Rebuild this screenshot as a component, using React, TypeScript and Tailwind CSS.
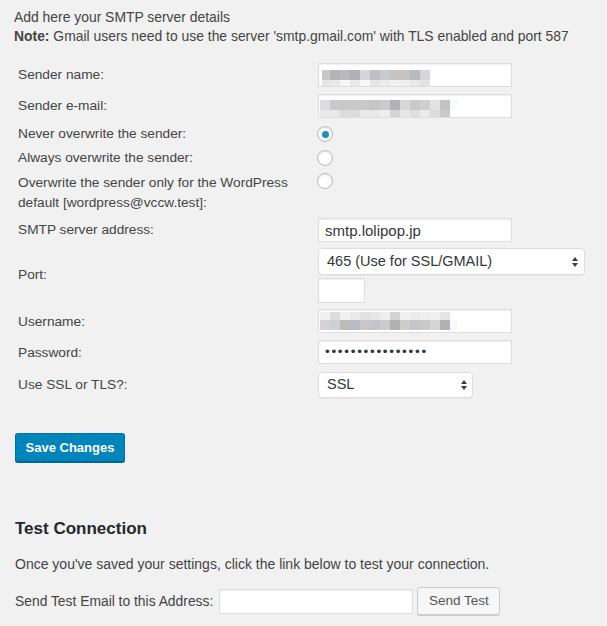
import React from "react";

type MRow = { h: number; colors: string[] };

function Mosaic({ rows, widths }: { rows: MRow[]; widths: number[] }) {
  return (
    <div className="flex flex-col">
      {rows.map((r, i) => (
        <div key={i} className="flex">
          {r.colors.map((c, j) => (
            <div key={j} style={{ width: widths[j], height: r.h, background: c }} />
          ))}
        </div>
      ))}
    </div>
  );
}

function Arrows() {
  return (
    <svg width="6" height="10" viewBox="0 0 6 10" className="block">
      <path d="M3 0L6 4H0z" fill="#3c3c3c" />
      <path d="M0 6H6L3 10z" fill="#3c3c3c" />
    </svg>
  );
}

function Radio({ checked }: { checked?: boolean }) {
  return (
    <div className="-ml-px w-[16px] h-[16px] rounded-full bg-white border border-[#b4b9be] shadow-[inset_0_1px_2px_rgba(0,0,0,0.1)] flex items-center justify-center">
      {checked && <div className="w-[7px] h-[7px] rounded-full bg-[#1e8cbe]" />}
    </div>
  );
}

function Row({
  label,
  className,
  labelClass,
  children,
}: {
  label: React.ReactNode;
  className: string;
  labelClass?: string;
  children: React.ReactNode;
}) {
  return (
    <div className={"flex " + className}>
      <div className={"w-[318px] shrink-0 pl-[18px] " + (labelClass || "")}>{label}</div>
      <div>{children}</div>
    </div>
  );
}

const boxCls =
  "bg-white border border-[#ddd] shadow-[inset_0_1px_2px_rgba(0,0,0,0.07)]";

const w10 = (n: number) => Array.from({ length: n }, () => 10);

export default function App() {
  return (
    <div className="font-['Liberation_Sans',Arial,Helvetica,sans-serif] min-h-[626px] bg-[#f1f1f1] text-[#444] text-[13.7px]">
      <div className="pl-[14px] pt-[8px] leading-[19px] text-[13.9px]">
        <p>Add here your SMTP server details</p>
        <p>
          <strong className="font-bold">Note:</strong> Gmail users need to use the server 'smtp.gmail.com' with TLS
          enabled and port 587
        </p>
      </div>

      <div className="mt-[15px]">
        <Row label="Sender name:" className="h-[28px] items-center">
          <div className={boxCls + " w-[194px] h-[24px] pl-[3px] pt-[6px]"}>
            <Mosaic
              widths={[8, ...w10(10)]}
              rows={[
                {
                  h: 10,
                  colors: ["#c8c6c7", "#b4b3b6", "#b9b8bb", "#b1b0b4", "#d5d5d7", "#bfbfc1", "#c8cbcd", "#c6c5c5", "#c6c5c5", "#b8bbbd", "#d6d6d8"],
                },
                {
                  h: 6,
                  colors: ["#e6e6e6", "#e9e9e9", "#f6f6f6", "#e9e9e9", "#f6f6f6", "#e4e5e5", "#eaecec", "#f1f1f1", "#efefef", "#e8e8e8", "#e3e3e3"],
                },
              ]}
            />
          </div>
        </Row>
        <Row label="Sender e-mail:" className="mt-[3px] h-[28px] items-center">
          <div className={boxCls + " w-[194px] h-[24px] pl-[1px] pt-[5px]"}>
            <Mosaic
              widths={[...w10(13), 7]}
              rows={[
                {
                  h: 10,
                  colors: ["#dcdcdc", "#c8c9cc", "#c9c7c7", "#c9c9cb", "#cac8c8", "#c6c6c9", "#cbcbcb", "#b2b2b6", "#d7d7d7", "#cacacd", "#cfcfcf", "#e2e2e4", "#c2c2c2", "#f6fafb"],
                },
                {
                  h: 7,
                  colors: ["#e8e8e8", "#e7e8ea", "#dcdcdc", "#d9dadd", "#e9e9e9", "#e7e8ea", "#eeeeee", "#d3d3d8", "#e8e7e7", "#dfdfe2", "#ebebeb", "#dcdcdc", "#c9c9cc", "#ffffff"],
                },
              ]}
            />
          </div>
        </Row>
        <Row label="Never overwrite the sender:" className="mt-[2px] h-[24px] items-center">
          <Radio checked />
        </Row>
        <Row label="Always overwrite the sender:" className="h-[24px] items-center">
          <Radio />
        </Row>
        <Row
          label={
            <>
              Overwrite the sender only for the WordPress
              <br />
              default [wordpress@vccw.test]:
            </>
          }
          className="h-[46px] items-start"
          labelClass="pt-[3px] leading-[20px]"
        >
          <div className="pt-[3px]">
            <Radio />
          </div>
        </Row>
        <Row label="SMTP server address:" className="h-[28px] items-center">
          <input
            readOnly
            value="smtp.lolipop.jp"
            className={boxCls + " block w-[194px] h-[24px] px-[6px] text-[15px] text-[#32373c] outline-none"}
          />
        </Row>
        <Row label="Port:" className="mt-[2px] h-[59px] items-center">
          <div className="flex flex-col gap-[3px]">
            <div className="w-[267px] h-[27px] bg-white border border-[#ddd] rounded-[4px] shadow-[0_1px_1px_rgba(0,0,0,0.04)] flex items-center justify-between pl-[8px] pr-[6px] text-[14.5px] text-[#32373c]">
              <span>465 (Use for SSL/GMAIL)</span>
              <Arrows />
            </div>
            <input readOnly className={boxCls + " block w-[47px] h-[25px] outline-none"} />
          </div>
        </Row>
        <Row label="Username:" className="mt-[2px] h-[28px] items-center" labelClass="pt-[2px]">
          <div className={boxCls + " w-[194px] h-[24px] pl-[1px] pt-[2px]"}>
            <Mosaic
              widths={[...w10(13), 8]}
              rows={[
                {
                  h: 8,
                  colors: ["#f0f0f0", "#dcdcdc", "#f0f0f0", "#e9e9e9", "#e1e1e1", "#e6e6e6", "#eeeeee", "#d3d3d3", "#f0f0f0", "#ebebeb", "#eeeeee", "#f0f0f0", "#e4e4e4", "#ffffff"],
                },
                {
                  h: 10,
                  colors: ["#d3d3d3", "#cdd0d4", "#bdbcbd", "#bbbcc1", "#c8c6c6", "#c3c4ca", "#cdcbcb", "#b1b1b4", "#cdcdcd", "#c5c5ca", "#cac9ca", "#d5d5d5", "#b1b0b2", "#f8f9ff"],
                },
              ]}
            />
          </div>
        </Row>
        <Row label="Password:" className="mt-[3px] h-[28px] items-center" labelClass="pt-[2px]">
          <div className={boxCls + " w-[194px] h-[24px] pl-[6px] flex items-center text-[13.5px] tracking-[1.7px] text-[#32373c]"}>
            ••••••••••••••••
          </div>
        </Row>
        <Row label="Use SSL or TLS?:" className="mt-[4px] h-[30px] items-center">
          <div className="w-[155px] h-[26px] bg-white border border-[#ddd] rounded-[4px] shadow-[0_1px_1px_rgba(0,0,0,0.04)] flex items-center justify-between pl-[8px] pr-[5px] text-[14.5px] text-[#32373c]">
            <span>SSL</span>
            <Arrows />
          </div>
        </Row>
      </div>

      <div className="pl-[15px] mt-[33px]">
        <button className="w-[110px] h-[29px] bg-[#0085ba] border border-[#0073aa] border-b-[#006799] rounded-[3px] shadow-[0_1px_0_#006799] text-white text-[13px] font-bold">
          Save Changes
        </button>
      </div>

      <h2 className="pl-[15px] mt-[55px] leading-[24px] text-[17px] font-bold text-[#23282d]">Test Connection</h2>
      <p className="pl-[15px] mt-[14px] leading-[19px] text-[14px]">
        Once you've saved your settings, click the link below to test your connection.
      </p>
      <div className="pl-[15px] mt-[13px] h-[28px] flex items-center">
        <span className="text-[13.85px]">Send Test Email to this Address:</span>
        <input readOnly className={boxCls + " block ml-[6px] w-[194px] h-[25px] outline-none"} />
        <button className="ml-[4px] w-[83px] h-[28px] bg-[#f7f7f7] border border-[#ccc] rounded-[3px] shadow-[0_1px_0_#ccc] text-[#555] text-[13.5px]">
          Send Test
        </button>
      </div>
    </div>
  );
}
